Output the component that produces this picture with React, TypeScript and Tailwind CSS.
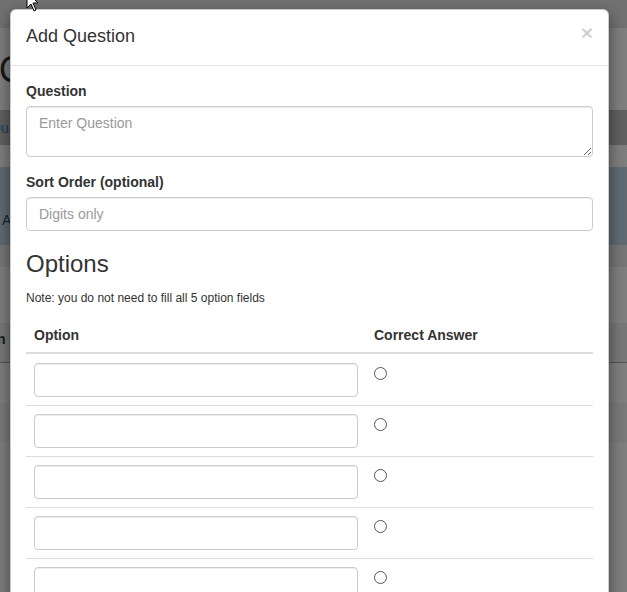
const fontStack = { fontFamily: '"Liberation Sans", Arial, sans-serif' };

const rows = [0, 1, 2, 3, 4];

const PageBehind = () => {
  return (
    <div className="h-screen overflow-hidden bg-white text-[#333] text-sm">
      <div className="h-[28px] bg-[#e4e4e4]" />
      <div className="h-[82px] pt-[22px]">
        <h1 className="text-[36px] leading-[40px] indent-[-1px] text-[#333]">Questions</h1>
      </div>
      <div className="h-[35px] bg-[#c0c0c0] pt-[8px] leading-5 text-[#337ab7] indent-[-10px]">Quantity</div>
      <div className="h-[22px]" />
      <div className="h-[78px] bg-[#c3d6e4] pt-[43px] pl-[2px] leading-5 text-[#1f4f6f]">Add a question below</div>
      <div className="h-[22px] bg-[#eeeeee]" />
      <div className="h-[56px]" />
      <div className="h-[40px] bg-[#f0f0f0] border-b border-[#aaa] pt-[6px] font-bold leading-5 indent-[-55px]">Question</div>
      <div className="h-[40px] bg-white" />
      <div className="h-[40px] bg-[#f4f4f4]" />
    </div>
  );
};

const OptionRow = ({ first }: { first: boolean }) => {
  return (
    <div
      className={
        first
          ? 'flex pt-[9px] pb-2'
          : 'flex pt-2 pb-2 border-t border-[#ddd]'
      }
    >
      <div className="w-[340px] px-2">
        <input
          type="text"
          className="block w-full h-[34px] px-3 rounded border border-[#ccc] bg-white shadow-[inset_0_1px_1px_rgba(0,0,0,0.075)] outline-none"
        />
      </div>
      <div className="flex-1 px-2">
        <span className="block w-[13px] h-[13px] mt-[4px] rounded-full border border-[#555] bg-white" />
      </div>
    </div>
  );
};

export default function App() {
  return (
    <div className="relative h-screen overflow-hidden" style={fontStack}>
      <PageBehind />

      {/* backdrop + modal */}
      <div className="absolute inset-0 bg-black/50">
        <div className="ml-[10px] mt-[9px] w-[599px] rounded-md border border-black/20 bg-white shadow-[0_5px_15px_rgba(0,0,0,0.5)] text-[#333] text-sm">
          <div className="flex items-start justify-between px-[15px] pt-[13px] pb-[16px] border-b border-[#e5e5e5]">
            <h4 className="text-[18px] leading-[26px] font-normal">Add Question</h4>
            <button className="mt-[-1px] text-[21px] leading-none font-bold text-black/20">×</button>
          </div>

          <div className="p-[15px]">
            <div className="mb-[15px]">
              <label className="block mb-[5px] font-bold leading-5">Question</label>
              <textarea
                placeholder="Enter Question"
                className="block w-full h-[51px] px-3 py-[6px] rounded border border-[#ccc] leading-5 shadow-[inset_0_1px_1px_rgba(0,0,0,0.075)] placeholder:text-[#999] outline-none"
              />
            </div>

            <div>
              <label className="block mb-[5px] font-bold leading-5">Sort Order (optional)</label>
              <input
                type="text"
                placeholder="Digits only"
                className="block w-full h-[34px] px-3 rounded border border-[#ccc] shadow-[inset_0_1px_1px_rgba(0,0,0,0.075)] placeholder:text-[#999] outline-none"
              />
            </div>

            <h3 className="mt-[20px] text-[24px] leading-[26px] font-normal">Options</h3>
            <p className="mt-[13px] text-[12px] leading-[17px]">
              Note: you do not need to fill all 5 option fields
            </p>

            <div className="mt-[11px]">
              <div className="flex h-[36px] items-center border-b-2 border-[#ddd] font-bold">
                <div className="w-[340px] px-2">Option</div>
                <div className="flex-1 px-2">Correct Answer</div>
              </div>
              {rows.map((r) => (
                <OptionRow key={r} first={r === 0} />
              ))}
            </div>
          </div>
        </div>
      </div>

      {/* mouse pointer */}
      <svg className="absolute left-[26px] top-[-9px]" width="14" height="22" viewBox="0 0 14 22">
        <path d="M1 1 L1 17 L5 13 L8 20 L10 19 L7 12 L12 12 Z" fill="#fff" stroke="#000" strokeWidth="1" />
      </svg>
    </div>
  );
}
